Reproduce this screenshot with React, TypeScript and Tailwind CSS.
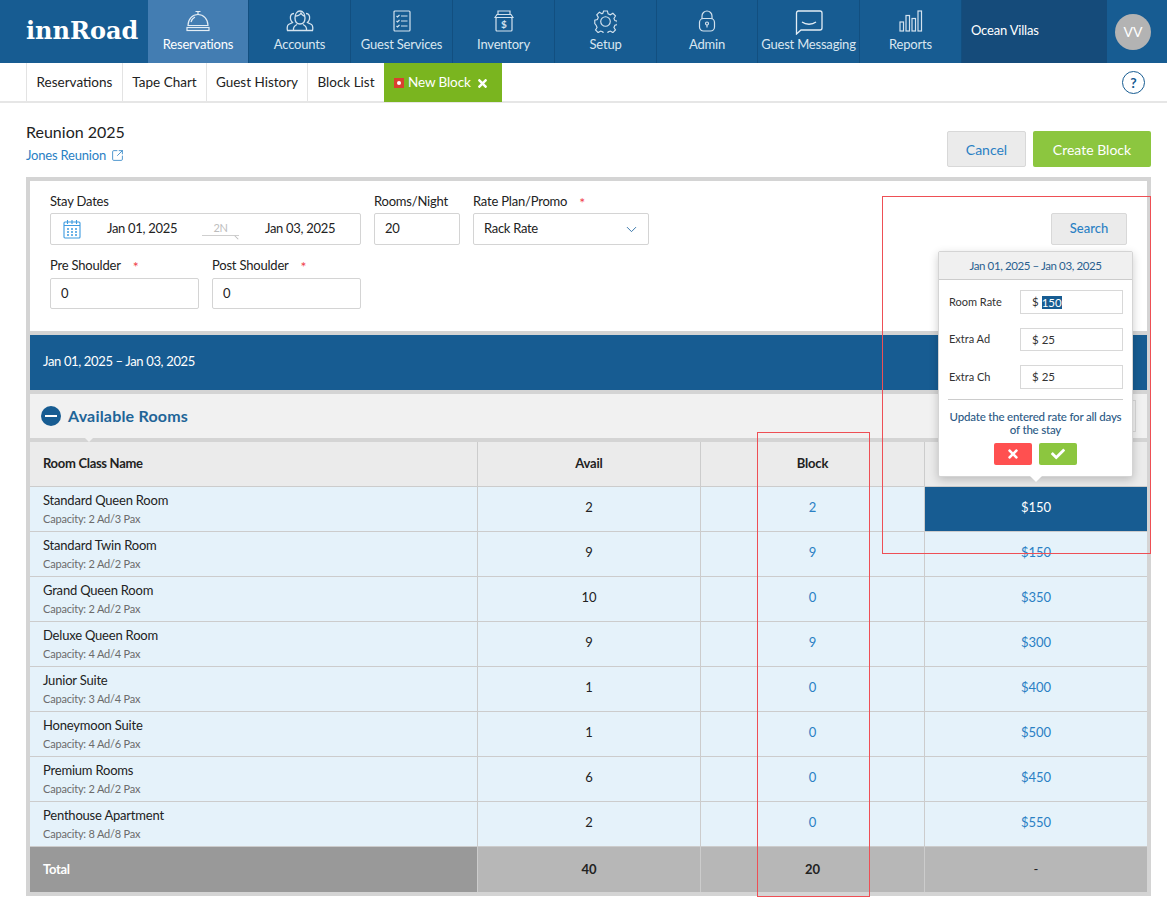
import React from "react";
import { ChevronDown, SquareArrowOutUpRight } from "lucide-react";
import { FaTimes, FaCheck } from "react-icons/fa";

const stroke = "#d3e2ee";

const BellIcon = () => (
  <svg width="24" height="22" viewBox="0 0 24 22" fill="none" stroke="#e3edf5" strokeWidth="1.2">
    <path d="M9.5 1.5h5M12 1.5v3" />
    <path d="M2 15.5C2 9 6.5 4.5 12 4.5S22 9 22 15.5z" />
    <path d="M5 12c.6-2.5 2-4 4-5" />
    <rect x="1" y="17.5" width="22" height="3" />
  </svg>
);

const AccountsIcon = () => (
  <svg width="28" height="22" viewBox="0 0 28 22" fill="none" stroke={stroke} strokeWidth="1.3">
    <path d="M9 8c0-4 2-7 5-7s5 3 5 7-2 6-5 6-5-2-5-6z" />
    <path d="M9 6c2 0 5-1 6-3 1 2 2 3 4 3" />
    <path d="M8 3.500C5 3.500 4 6 4.500 9c.2 1.500 1 2.500 2 3.500L2.500 14.500C1 15.500 1 19 1.500 20.500H26.500C27 19 27 15.500 25.500 14.500L21.500 12.500c1-1 1.800-2 2-3.500.5-3-.5-5.500-3.500-5.500" />
    <path d="M7.500 20.500c-.5-3 .5-4.500 3.500-6M20.500 20.500c.5-3-.5-4.500-3.500-6" />
  </svg>
);

const ServicesIcon = () => (
  <svg width="18" height="22" viewBox="0 0 18 22" fill="none" stroke={stroke} strokeWidth="1.2">
    <rect x="1" y="1" width="16" height="20" rx="1" />
    <path d="M3.500 6l1 1 2-2M3.500 11l1 1 2-2M3.500 16l1 1 2-2" />
    <path d="M8 6h6.500M8 11h6.500M8 16h6.500" />
  </svg>
);

const InventoryIcon = () => (
  <svg width="20" height="22" viewBox="0 0 20 22" fill="none" stroke={stroke} strokeWidth="1.2">
    <path d="M4 5V1h12v4" />
    <path d="M1 7.500 3 4.500h14l2 3z" />
    <rect x="2" y="7.500" width="16" height="13.500" rx="1" />
    <text x="10" y="18" textAnchor="middle" fontSize="10" fontWeight="700" fill={stroke} stroke="none" fontFamily="Lato, sans-serif">$</text>
  </svg>
);

// eight toothed gear, rounder than the lucide one
const GearIcon = () => (
  <svg width="23" height="23" viewBox="0 0 24 24" fill="none" stroke={stroke} strokeWidth="1.2">
    <path d="M10 1.500h4l.7 3 2.300 1 2.700-1.600 2.700 2.800-1.600 2.600 1 2.300 2.700.7v3.400l-2.700.7-1 2.300 1.600 2.600-2.700 2.800-2.700-1.600-2.300 1-.7 2.500h-4l-.7-2.500-2.300-1-2.700 1.600-2.700-2.800 1.600-2.600-1-2.300L.800 14.600v-3.400l2.700-.7 1-2.300L2.900 5.600l2.700-2.800 2.700 1.600 1-.7z" transform="translate(0 -.5)" />
    <circle cx="12" cy="12" r="5" />
  </svg>
);

const LockIcon = () => (
  <svg width="18" height="22" viewBox="0 0 18 22" fill="none" stroke={stroke} strokeWidth="1.2">
    <path d="M4 9V6a5 5 0 0 1 10 0v3" />
    <rect x="1.500" y="8.500" width="15" height="12.500" rx="4" />
    <circle cx="9" cy="13.500" r="1.500" />
    <path d="M9 15v2.500" />
  </svg>
);

const MessageIcon = () => (
  <svg width="28" height="25" viewBox="0 0 28 25" fill="none" stroke="#e3edf5" strokeWidth="1.300">
    <path d="M3 1h22a2 2 0 0 1 2 2v15a2 2 0 0 1-2 2H6l-4.500 4V3A2 2 0 0 1 3 1z" />
    <path d="M7 12c4 3 10 3 14 0" />
  </svg>
);

const ReportsIcon = () => (
  <svg width="24" height="22" viewBox="0 0 24 22" fill="none" stroke={stroke} strokeWidth="1.200">
    <rect x="1" y="12" width="3.500" height="9" />
    <rect x="7" y="5.500" width="3.500" height="15.500" />
    <rect x="13" y="8.500" width="3.500" height="12.500" />
    <rect x="19" y="1" width="3.500" height="20" />
  </svg>
);

const CalendarIcon = () => (
  <svg width="18" height="20" viewBox="0 0 18 20" fill="none" stroke="#3d9be0" strokeWidth="1.100">
    <rect x="1" y="3" width="16" height="16" rx="1" />
    <path d="M1 6.500h16M4.500 1v4M9 1v4M13.500 1v4" />
    <path d="M4 10h2M8 10h2M12 10h2M4 13h2M8 13h2M12 13h2M4 16h2M8 16h2M12 16h2" strokeWidth="1.500" />
  </svg>
);

const navItems = [
  { label: "Reservations", icon: <BellIcon />, width: "w-[101px]", active: true },
  { label: "Accounts", icon: <AccountsIcon />, width: "w-[102px]" },
  { label: "Guest Services", icon: <ServicesIcon />, width: "w-[102px]" },
  { label: "Inventory", icon: <InventoryIcon />, width: "w-[102px]" },
  { label: "Setup", icon: <GearIcon />, width: "w-[102px]" },
  { label: "Admin", icon: <LockIcon />, width: "w-[101px]" },
  { label: "Guest Messaging", icon: <MessageIcon />, width: "w-[102px]" },
  { label: "Reports", icon: <ReportsIcon />, width: "w-[102px]" },
];

const rooms = [
  { name: "Standard Queen Room", cap: "Capacity: 2 Ad/3 Pax", avail: 2, block: 2, rate: "$150", selected: true },
  { name: "Standard Twin Room", cap: "Capacity: 2 Ad/2 Pax", avail: 9, block: 9, rate: "$150" },
  { name: "Grand Queen Room", cap: "Capacity: 2 Ad/2 Pax", avail: 10, block: 0, rate: "$350" },
  { name: "Deluxe Queen Room", cap: "Capacity: 4 Ad/4 Pax", avail: 9, block: 9, rate: "$300" },
  { name: "Junior Suite", cap: "Capacity: 3 Ad/4 Pax", avail: 1, block: 0, rate: "$400" },
  { name: "Honeymoon Suite", cap: "Capacity: 4 Ad/6 Pax", avail: 1, block: 0, rate: "$500" },
  { name: "Premium Rooms", cap: "Capacity: 2 Ad/2 Pax", avail: 6, block: 0, rate: "$450" },
  { name: "Penthouse Apartment", cap: "Capacity: 8 Ad/8 Pax", avail: 2, block: 0, rate: "$550" },
];

const subTabs = [
  { label: "Reservations", width: "w-[96px]" },
  { label: "Tape Chart", width: "w-[84px]" },
  { label: "Guest History", width: "w-[101px]" },
  { label: "Block List", width: "w-[77px]" },
];

const Star = () => <span className="relative top-[2px] ml-[12px] text-[14px] leading-none text-[#f0404a]">*</span>;

const inputClass =
  "border border-[#d4d4d4] rounded-[2px] bg-white flex items-center text-[13px] tracking-[-0.3px] text-[#222]";

const PopRow = ({ label, value, selected, h, mb }: { label: string; value: string; selected?: boolean; h: string; mb: string }) => (
  <div className={`flex items-center justify-between pl-[10px] pr-[9px] ${mb}`}>
    <span className="text-[11px] text-[#333]">{label}</span>
    <div className={`w-[103px] ${h} border border-[#d8d8d8] bg-white flex items-center pl-[11px] text-[11.500px] text-[#333]`}>
      <span className="mr-[3px]">$</span>
      {selected ? <span className="bg-[#175c92] text-white leading-[13px]">{value}</span> : <span>{value}</span>}
    </div>
  </div>
);

function App() {
  return (
    <div className="relative w-[1167px] h-[901px] overflow-hidden bg-white font-['Lato',sans-serif] text-[#222]">
      {/* top nav */}
      <div className="flex h-[63px] bg-[#175c92]">
        <div className="w-[148px] pl-[26px] pt-[16px] font-['DejaVu_Serif',serif] font-bold text-[24px] leading-[30px] text-white">
          innRoad
        </div>
        {navItems.map((item) => (
          <div
            key={item.label}
            className={`${item.width} flex flex-col items-center border-r border-[#124f80] pt-[10px] ${
              item.active ? "bg-[#437db2] text-white" : "text-[#d9e6f0]"
            }`}
          >
            <div className="h-[25px] flex items-start">{item.icon}</div>
            <span className="text-[13px] leading-[18px] whitespace-nowrap tracking-[-0.2px]">{item.label}</span>
          </div>
        ))}
        <div className="w-[145px] bg-[#154b7a] pl-[9px] flex items-center text-[13px] text-white pb-[1px] tracking-[-0.2px]">
          Ocean Villas
        </div>
        <div className="w-[60px] flex items-center justify-center pr-[8px]">
          <div className="w-[36px] h-[36px] rounded-full bg-[#b3b3b3] text-white text-[14px] flex items-center justify-center">
            VV
          </div>
        </div>
      </div>

      {/* sub nav */}
      <div className="flex h-[40px] border-b-2 border-[#e6e6e6] pl-[26px] pr-[22px]">
        {subTabs.map((tab) => (
          <div
            key={tab.label}
            className={`${tab.width} border-l-[1.500px] border-[#e3e3e3] flex items-center justify-center text-[13.500px]`}
          >
            {tab.label}
          </div>
        ))}
        <div className="w-[118px] h-[39px] bg-[#7ab51f] flex items-center pl-[10px] text-white text-[13.500px] tracking-[-0.1px]">
          <span className="w-[10px] h-[10px] bg-[#d9402f] flex items-center justify-center mr-[4px]">
            <span className="w-[4px] h-[4px] rounded-full bg-white" />
          </span>
          New Block
          <FaTimes size={13} className="ml-[5px] mt-[2px]" />
        </div>
        <div className="ml-auto flex items-center">
          <div className="w-[23px] h-[23px] rounded-full border-[1.500px] border-[#175c92] text-[#175c92] text-[14px] font-bold flex items-center justify-center">
            ?
          </div>
        </div>
      </div>

      {/* title row */}
      <div className="flex justify-between h-[74px] pl-[26px] pr-[16px]">
        <div className="pt-[18px]">
          <div className="text-[16px] leading-[22px] text-[#222]">Reunion 2025</div>
          <div className="mt-[1px] flex items-center gap-[5px] text-[13px] leading-[22px] tracking-[-0.2px] text-[#2a80c4]">
            Jones Reunion
            <SquareArrowOutUpRight size={13} strokeWidth={1.500} />
          </div>
        </div>
        <div className="flex gap-[7px] pt-[28px]">
          <div className="w-[79px] h-[36px] bg-[#ebebeb] border border-[#d8d8d8] rounded-[2px] flex items-center justify-center text-[14px] text-[#2a80c4]">
            Cancel
          </div>
          <div className="w-[118px] h-[36px] bg-[#8cc63f] rounded-[2px] flex items-center justify-center text-[14px] text-white">
            Create Block
          </div>
        </div>
      </div>

      {/* main panel */}
      <div className="mx-[26px] w-[1125px] border-4 border-[#d4d4d4] bg-[#d4d4d4] flex flex-col">
        {/* form */}
        <div className="relative h-[150px] bg-white pl-[20px] pt-[11px] text-[13px]">
          <div className="flex gap-[13px]">
            <div className="w-[311px]">
              <div className="h-[21px] leading-[19px] tracking-[-0.2px]">Stay Dates</div>
              <div className={`${inputClass} h-[32px] pl-[12px]`}>
                <CalendarIcon />
                <span className="ml-[26px] w-[95px]">Jan 01, 2025</span>
                <span className="relative w-[37px] h-[14px] border-b border-[#cfcfcf] text-center text-[11px] leading-[12px] text-[#bdbdbd]">
                  2N
                  <span className="absolute right-0 bottom-[-3px] w-[5px] border-t border-[#bdbdbd] rotate-45" />
                </span>
                <span className="ml-[26px]">Jan 03, 2025</span>
              </div>
            </div>
            <div className="w-[86px]">
              <div className="h-[21px] leading-[19px] tracking-[-0.2px]">Rooms/Night</div>
              <div className={`${inputClass} h-[32px] pl-[10px]`}>20</div>
            </div>
            <div className="w-[176px]">
              <div className="h-[21px] leading-[19px] tracking-[-0.2px]">
                Rate Plan/Promo
                <Star />
              </div>
              <div className={`${inputClass} h-[32px] pl-[10px] pr-[8px] justify-between`}>
                Rack Rate
                <ChevronDown size={17} strokeWidth={1.300} color="#2a6da5" />
              </div>
            </div>
            <div className="ml-auto mr-[20px] pt-[21px]">
              <div className="w-[76px] h-[32px] bg-[#ebebeb] border border-[#d8d8d8] rounded-[2px] flex items-center justify-center text-[13px] font-medium text-[#2a80c4]">
                Search
              </div>
            </div>
          </div>
          <div className="flex gap-[13px] mt-[11px]">
            <div className="w-[149px]">
              <div className="h-[22px] leading-[19px] tracking-[-0.2px]">
                Pre Shoulder
                <Star />
              </div>
              <div className={`${inputClass} h-[31px] pl-[10px]`}>0</div>
            </div>
            <div className="w-[149px]">
              <div className="h-[22px] leading-[19px] tracking-[-0.2px]">
                Post Shoulder
                <Star />
              </div>
              <div className={`${inputClass} h-[31px] pl-[10px]`}>0</div>
            </div>
          </div>
        </div>

        {/* date bar */}
        <div className="mt-[4px] h-[55px] bg-[#175c92] flex items-center pl-[13px] pb-[1px] text-[13px] tracking-[-0.35px] text-white">
          Jan 01, 2025 – Jan 03, 2025
        </div>

        {/* available rooms */}
        <div className="relative mt-[4px] h-[44px] bg-[#f1f1f1] flex items-center pl-[11px]">
          <div className="w-[20px] h-[20px] rounded-full bg-[#175c92] flex items-center justify-center">
            <span className="w-[12px] h-[2px] bg-white" />
          </div>
          <span className="ml-[7px] text-[16px] tracking-[0.2px] font-bold text-[#1f6598]">Available Rooms</span>
          <div className="absolute right-[11px] top-[6px] w-[60px] h-[32px] border border-[#d8d8d8]" />
          <div className="absolute left-[55px] bottom-[-4px] w-0 h-0 border-x-[4px] border-x-transparent border-t-[4px] border-t-[#f1f1f1]" />
        </div>

        {/* table */}
        <div className="mt-[4px] grid grid-cols-[448px_223px_224px_222px] text-[13px]">
          <div className="h-[45px] bg-[#ebebeb] border-r border-b border-[#cccccc] flex items-center pl-[13px] font-bold tracking-[-0.3px]">
            Room Class Name
          </div>
          <div className="h-[45px] bg-[#ebebeb] border-r border-b border-[#cccccc] flex items-center justify-center font-bold tracking-[-0.2px]">
            Avail
          </div>
          <div className="h-[45px] bg-[#ebebeb] border-r border-b border-[#cccccc] flex items-center justify-center font-bold tracking-[-0.2px]">
            Block
          </div>
          <div className="h-[45px] bg-[#ebebeb] border-b border-[#cccccc]" />

          {rooms.map((room) => (
            <React.Fragment key={room.name}>
              <div className="h-[45px] bg-[#e5f2fa] border-r border-b border-[#cccccc] pl-[13px] pt-[4px]">
                <div className="text-[13px] leading-[19px] tracking-[-0.2px]">{room.name}</div>
                <div className="text-[11px] leading-[18px] tracking-[-0.2px] text-[#6b6b6b]">{room.cap}</div>
              </div>
              <div className="h-[45px] bg-[#e5f2fa] border-r border-b border-[#cccccc] flex items-center justify-center pb-[3px]">
                {room.avail}
              </div>
              <div className="h-[45px] bg-[#e5f2fa] border-r border-b border-[#cccccc] flex items-center justify-center pb-[3px] text-[#2a80c4]">
                {room.block}
              </div>
              <div
                className={`h-[45px] border-b border-[#cccccc] flex items-center justify-center pb-[3px] ${
                  room.selected ? "bg-[#175c92] text-white" : "bg-[#e5f2fa] text-[#2a80c4]"
                }`}
              >
                {room.rate}
              </div>
            </React.Fragment>
          ))}

          <div className="h-[45px] bg-[#999999] border-r border-[#cccccc] flex items-center pl-[13px] font-bold text-white tracking-[-0.3px]">
            Total
          </div>
          <div className="h-[45px] bg-[#b7b7b7] border-r border-[#cccccc] flex items-center justify-center font-bold">
            40
          </div>
          <div className="h-[45px] bg-[#b7b7b7] border-r border-[#cccccc] flex items-center justify-center font-bold">
            20
          </div>
          <div className="h-[45px] bg-[#b7b7b7] flex items-center justify-center">-</div>
        </div>
      </div>

      {/* rate popover */}
      <div className="absolute left-[938px] top-[251px] w-[195px] h-[226px] bg-white border border-[#d4d4d4] rounded-[2px] shadow-[0_3px_10px_rgba(0,0,0,0.2)]">
        <div className="h-[28px] bg-[#f0f0f0] border-b border-[#cccccc] flex items-center justify-center text-[11.500px] tracking-[-0.4px] text-[#2a5f8f]">
          Jan 01, 2025 – Jan 03, 2025
        </div>
        <div className="pt-[10px]">
          <PopRow label="Room Rate" value="150" selected h="h-[24px]" mb="mb-[14px]" />
          <PopRow label="Extra Ad" value="25" h="h-[23px]" mb="mb-[14px]" />
          <PopRow label="Extra Ch" value="25" h="h-[24px]" mb="mb-[10px]" />
        </div>
        <div className="mx-[9px] border-t border-[#cccccc]" />
        <div className="mt-[10px] px-[10px] text-center text-[11.500px] font-medium leading-[13px] tracking-[-0.2px] text-[#2c5a85]">
          Update the entered rate for all days of the stay
        </div>
        <div className="mt-[7px] flex justify-center gap-[7px]">
          <div className="w-[38px] h-[22px] bg-[#ff5050] rounded-[2px] flex items-center justify-center text-white">
            <FaTimes size={14} />
          </div>
          <div className="w-[38px] h-[22px] bg-[#8cc63f] rounded-[2px] flex items-center justify-center text-white">
            <FaCheck size={14} />
          </div>
        </div>
        <div className="absolute left-[91px] bottom-[-6px] w-0 h-0 border-x-[6px] border-x-transparent border-t-[6px] border-t-white" />
      </div>

      {/* red annotation boxes */}
      <div className="absolute left-[882px] top-[196px] w-[269px] h-[358px] border border-[#ee4f55] pointer-events-none" />
      <div className="absolute left-[757px] top-[432px] w-[113px] h-[465px] border border-[#ee4f55] pointer-events-none" />
    </div>
  );
}

export default App;
